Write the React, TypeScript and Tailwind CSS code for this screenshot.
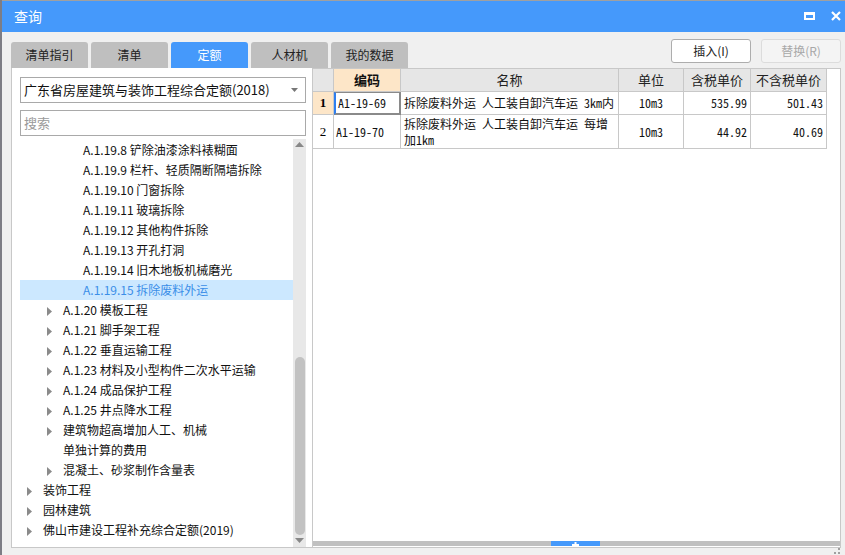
import React from "react";

const cjk = "font-['Microsoft_YaHei','Noto_Sans_CJK_SC',sans-serif]";
const cellFont =
  "font-['Noto_Sans_Mono_CJK_SC','Liberation_Mono','Noto_Sans_CJK_SC',monospace]";

const tabs = ["清单指引", "清单", "定额", "人材机", "我的数据"];

type TreeRow = { text: string; level: 1 | 2 | 3; arrow?: boolean; selected?: boolean };

const treeRows: TreeRow[] = [
  { text: "A.1.19.8 铲除油漆涂料裱糊面", level: 3 },
  { text: "A.1.19.9 栏杆、轻质隔断隔墙拆除", level: 3 },
  { text: "A.1.19.10 门窗拆除", level: 3 },
  { text: "A.1.19.11 玻璃拆除", level: 3 },
  { text: "A.1.19.12 其他构件拆除", level: 3 },
  { text: "A.1.19.13 开孔打洞", level: 3 },
  { text: "A.1.19.14 旧木地板机械磨光", level: 3 },
  { text: "A.1.19.15 拆除废料外运", level: 3, selected: true },
  { text: "A.1.20 模板工程", level: 2, arrow: true },
  { text: "A.1.21 脚手架工程", level: 2, arrow: true },
  { text: "A.1.22 垂直运输工程", level: 2, arrow: true },
  { text: "A.1.23 材料及小型构件二次水平运输", level: 2, arrow: true },
  { text: "A.1.24 成品保护工程", level: 2, arrow: true },
  { text: "A.1.25 井点降水工程", level: 2, arrow: true },
  { text: "建筑物超高增加人工、机械", level: 2, arrow: true },
  { text: "单独计算的费用", level: 2 },
  { text: "混凝土、砂浆制作含量表", level: 2, arrow: true },
  { text: "装饰工程", level: 1, arrow: true },
  { text: "园林建筑", level: 1, arrow: true },
  { text: "佛山市建设工程补充综合定额(2019)", level: 1, arrow: true },
];

// padding per level so text lands at x 43 / 63 / 83
const levelPad = { 1: "pl-[23px]", 2: "pl-[43px]", 3: "pl-[63px]" };

const Arrow = () => (
  <svg width="5" height="9" viewBox="0 0 5 9" className="absolute left-[-16px] top-[6px]">
    <path d="M0 0 L5 4.5 L0 9 Z" fill="#8a8a8a" />
  </svg>
);

const TitleBar = () => (
  <div className="h-[32px] bg-[#4599fb] flex items-center justify-between pl-[12px] pr-[4px]">
    <span className={`${cjk} text-[14px] text-white`}>查询</span>
    <div className="flex items-center gap-[16px]">
      <svg width="11" height="8" viewBox="0 0 11 8">
        <rect x="1" y="1" width="9" height="6" fill="none" stroke="white" strokeWidth="2" />
        <rect x="0" y="0" width="11" height="3" fill="white" />
      </svg>
      <svg width="10" height="10" viewBox="0 0 10 10">
        <path d="M1 1 L9 9 M9 1 L1 9" stroke="white" strokeWidth="2.2" />
      </svg>
    </div>
  </div>
);

const TabRow = () => (
  <div className="h-[36px] flex justify-between">
    <div className="flex gap-[3px] self-end">
      {tabs.map((t) => (
        <div
          key={t}
          className={`${cjk} w-[77px] h-[26px] rounded-t-[3px] flex items-center justify-center text-[12px] ${
            t === "定额" ? "bg-[#4599fb] text-white" : "bg-[#bfbfbf] text-[#222]"
          }`}
        >
          {t}
        </div>
      ))}
    </div>
    <div className="flex gap-[10px] mt-[7px] h-[24px]">
      <button
        className={`${cjk} w-[80px] h-[24px] rounded-[3px] border border-[#adadad] bg-white text-[12px] text-[#222]`}
      >
        插入(I)
      </button>
      <button
        className={`${cjk} w-[80px] h-[24px] rounded-[3px] border border-[#dcdcdc] bg-[#f4f4f4] text-[12px] text-[#a8a8a8]`}
      >
        替换(R)
      </button>
    </div>
  </div>
);

const TreeScrollbar = () => (
  <div className="w-[13px] bg-[#e8e8e8] flex flex-col items-center">
    <svg width="9" height="5" viewBox="0 0 9 5" className="mt-[3px]">
      <path d="M0 5 L4.5 0 L9 5 Z" fill="#888" />
    </svg>
    <div className="flex-1" />
    <div className="w-[10px] h-[178px] rounded-[5px] bg-[#c2c2c2]" />
    <svg width="9" height="5" viewBox="0 0 9 5" className="mt-[3px] mb-[4px]">
      <path d="M0 0 L9 0 L4.5 5 Z" fill="#888" />
    </svg>
  </div>
);

const LeftPanel = () => (
  <div className="w-[301px] bg-white border-l border-b border-[#c8c8c8] flex flex-col pl-[8px] pr-[6px] pt-[9px]">
    <div className="h-[26px] border border-[#a9a9a9] flex items-center justify-between pl-[3px] pr-[7px]">
      <span className={`${cjk} text-[13px] text-[#111]`}>广东省房屋建筑与装饰工程综合定额(2018)</span>
      <svg width="7" height="4" viewBox="0 0 7 4">
        <path d="M0 0 L7 0 L3.5 4 Z" fill="#777" />
      </svg>
    </div>
    <div className="h-[26px] mt-[7px] border border-[#a9a9a9] flex items-center pl-[3px]">
      <span className={`${cjk} text-[13px] text-[#9a9a9a]`}>搜索</span>
    </div>
    <div className="flex-1 flex mt-[3px] min-h-0">
      <div className="flex-1 pt-[1px]">
        {treeRows.map((r) => (
          <div
            key={r.text}
            className={`h-[20px] flex items-center ${levelPad[r.level]} ${r.selected ? "bg-[#cce8ff]" : ""}`}
          >
            <span
              className={`${cjk} relative text-[12px] whitespace-nowrap ${
                r.selected ? "text-[#3b8ee8]" : "text-[#111]"
              }`}
            >
              {r.arrow && <Arrow />}
              {r.text}
            </span>
          </div>
        ))}
      </div>
      <TreeScrollbar />
    </div>
  </div>
);

const cols = ["w-[21px]", "w-[67px]", "w-[218px]", "w-[65px]", "w-[67px]", "w-[76px]"];
const headers = ["", "编码", "名称", "单位", "含税单价", "不含税单价"];

const rows = [
  {
    no: "1",
    code: "A1-19-69",
    lines: ["拆除废料外运 人工装自卸汽车运 3km内"],
    unit: "10m3",
    tax: "535.99",
    noTax: "501.43",
    h: "h-[23px]",
    active: true,
  },
  {
    no: "2",
    code: "A1-19-70",
    lines: ["拆除废料外运 人工装自卸汽车运 每增", "加1km"],
    unit: "10m3",
    tax: "44.92",
    noTax: "40.69",
    h: "h-[34px]",
    active: false,
  },
];

const RightPanel = () => (
  <div className="flex-1 bg-white border border-[#c8c8c8] flex flex-col">
    <div className="flex-1">
      <div className="flex h-[23px]">
        {headers.map((h, i) => (
          <div
            key={i}
            className={`${cols[i]} border-r border-b border-[#c8c8c8] flex items-center justify-center ${cjk} text-[13px] ${
              i === 1 ? "bg-[#fde6c8] font-bold text-[#111]" : "bg-[#e6e6e6] text-[#222]"
            }`}
          >
            {h}
          </div>
        ))}
      </div>
      {rows.map((r) => (
        <div key={r.no} className={`flex ${r.h}`}>
          <div
            className={`${cols[0]} border-r border-b border-[#c8c8c8] flex items-center justify-center font-['Liberation_Serif',serif] text-[13px] ${
              r.active ? "bg-[#fde6c8] font-bold" : "bg-white"
            }`}
          >
            {r.no}
          </div>
          <div
            className={`${cols[1]} border-b border-[#c8c8c8] flex items-center pl-[2px] ${cellFont} text-[12px] text-[#111] ${
              r.active
                ? "border-l-2 border-l-[#2e7ff0] border-r-2 border-r-[#8a8a8a] border-b-2 border-b-[#8a8a8a] border-t border-t-[#8a8a8a]"
                : "border-r"
            }`}
          >
            {r.code}
          </div>
          <div
            className={`${cols[2]} border-r border-b border-[#c8c8c8] flex flex-col justify-center pl-[3px] ${cellFont} text-[12px] text-[#111] whitespace-nowrap`}
          >
            {r.lines.map((l) => (
              <div key={l} className="leading-[16px]">
                {l}
              </div>
            ))}
          </div>
          <div
            className={`${cols[3]} border-r border-b border-[#c8c8c8] flex items-center justify-center ${cellFont} text-[12px] text-[#111]`}
          >
            {r.unit}
          </div>
          <div
            className={`${cols[4]} border-r border-b border-[#c8c8c8] flex items-center justify-end pr-[3px] ${cellFont} text-[12px] text-[#111]`}
          >
            {r.tax}
          </div>
          <div
            className={`${cols[5]} border-r border-b border-[#c8c8c8] flex items-center justify-end pr-[3px] ${cellFont} text-[12px] text-[#111]`}
          >
            {r.noTax}
          </div>
        </div>
      ))}
    </div>
    <div className="h-[5px] bg-[#c0c0c0] flex mb-[1px]">
      <div className="ml-[238px] w-[49px] bg-[#4599fb] flex items-start justify-center">
        <svg width="7" height="4" viewBox="0 0 7 4" className="mt-[1px]">
          <path d="M2.5 0 H4.5 V2 H7 V4 H0 V2 H2.5 Z" fill="white" />
        </svg>
      </div>
    </div>
  </div>
);

const Grip = () => (
  <svg width="6" height="6" viewBox="0 0 6 6" className="self-end mr-[1px] mb-[1px]">
    <rect x="4" y="0" width="2" height="2" fill="#a0a0a0" />
    <rect x="0" y="4" width="2" height="2" fill="#a0a0a0" />
    <rect x="4" y="4" width="2" height="2" fill="#a0a0a0" />
  </svg>
);

export default function App() {
  return (
    <div className="w-[845px] h-[555px] flex bg-[#f0f0f0] overflow-hidden">
      <div className="w-[2px] bg-[#7d7d85]" />
      <div className="flex-1 flex flex-col">
        <div className="h-[1px] bg-[#a0a0a0]" />
        <TitleBar />
        <div className="flex-1 flex flex-col pl-[9px] pr-[4px]">
          <TabRow />
          <div className="h-[480px] flex">
            <LeftPanel />
            <RightPanel />
          </div>
          <div className="flex-1 flex justify-end">
            <Grip />
          </div>
        </div>
      </div>
    </div>
  );
}
